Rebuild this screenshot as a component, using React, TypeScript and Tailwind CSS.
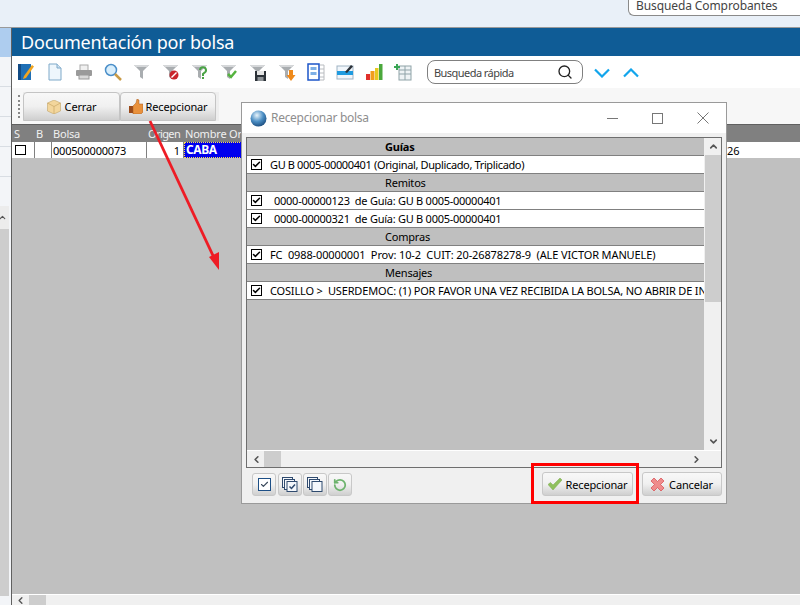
import React from 'react';
import { Check, ChevronDown, ChevronLeft, ChevronRight, ChevronUp, RotateCcw, Search } from 'lucide-react';

const FONT = "font-['Noto_Sans','Open_Sans',sans-serif]";

const ToolIcon: React.FC<{ children: React.ReactNode }> = ({ children }) => (
  <svg width="18" height="18" viewBox="0 0 18 18" className="shrink-0">
    {children}
  </svg>
);

const Funnel = () => (
  <>
    <path d="M1 2h15l-6 6v8l-3-2V8z" fill="#a9adb0" />
    <path d="M1 2h15l-2 2H3z" fill="#d5d7d9" />
  </>
);

const toolbarIcons = [
  <ToolIcon key="edit">
    <rect x="1" y="1" width="13" height="16" fill="#1f6fb5" />
    <rect x="1" y="1" width="3" height="16" fill="#124b85" />
    <path d="M7 13L15 2l2 1.500L9 15l-3 1z" fill="#f2a51f" />
  </ToolIcon>,
  <ToolIcon key="doc">
    <path d="M3 1h8l4 4v12H3z" fill="#eef6fc" stroke="#7fa9c9" />
    <path d="M11 1v4h4" fill="#cfe2f1" stroke="#7fa9c9" />
  </ToolIcon>,
  <ToolIcon key="print">
    <rect x="5" y="2" width="8" height="6" fill="#f0f0f0" stroke="#aaa" />
    <rect x="1" y="7" width="16" height="6" rx="1" fill="#9a9a9a" />
    <rect x="4" y="12" width="10" height="4" fill="#d8d8d8" stroke="#999" />
  </ToolIcon>,
  <ToolIcon key="search">
    <circle cx="7" cy="7" r="5.500" fill="#d8eefc" stroke="#4b8fc9" strokeWidth="1.500" />
    <path d="M11 11l6 6" stroke="#c99a45" strokeWidth="2.500" />
  </ToolIcon>,
  <ToolIcon key="filter"><Funnel /></ToolIcon>,
  <ToolIcon key="filter-no">
    <Funnel />
    <circle cx="12" cy="12" r="4.500" fill="#c9252c" />
    <path d="M9.500 14.500l5-5" stroke="#fff" strokeWidth="1.500" />
  </ToolIcon>,
  <ToolIcon key="filter-help">
    <Funnel />
    <path d="M9 7a3 3 0 1 1 4 3l-1 1v2" fill="none" stroke="#4aa345" strokeWidth="2" />
    <rect x="11" y="14" width="2" height="2" fill="#4aa345" />
  </ToolIcon>,
  <ToolIcon key="filter-ok">
    <Funnel />
    <path d="M8 11l3 3 5-6" fill="none" stroke="#55b33f" strokeWidth="2.500" />
  </ToolIcon>,
  <ToolIcon key="filter-save">
    <Funnel />
    <rect x="6" y="8" width="11" height="10" fill="#2c3238" />
    <rect x="8" y="8" width="7" height="4" fill="#e6e6e6" />
    <rect x="8.500" y="14" width="6" height="4" fill="#8f9498" />
  </ToolIcon>,
  <ToolIcon key="filter-down">
    <Funnel />
    <path d="M11 7h4v5h2.500L13 18l-4.500-6H11z" fill="#ef8a1c" />
  </ToolIcon>,
  <ToolIcon key="columns">
    <rect x="1" y="1" width="11" height="16" fill="#fff" stroke="#1d56c9" strokeWidth="1.500" />
    <rect x="3.500" y="4" width="6" height="3" fill="#7eb0e6" />
    <rect x="3.500" y="9" width="6" height="3" fill="#7eb0e6" />
    <path d="M13 2h4v15h-4M13 6h4M13 10h4M13 14h4" fill="none" stroke="#b9bcc0" />
  </ToolIcon>,
  <ToolIcon key="card">
    <rect x="1" y="3" width="16" height="13" fill="#f1f6fb" stroke="#9fb3c4" />
    <rect x="1" y="8" width="16" height="4" fill="#1f9be0" />
    <path d="M9 9l6-7 2 1.500L11 10z" fill="#2b3138" />
  </ToolIcon>,
  <ToolIcon key="chart">
    <rect x="1" y="11" width="4" height="6" fill="#e0302b" />
    <rect x="5.500" y="8" width="4" height="9" fill="#f29d1c" />
    <rect x="10" y="5" width="3.500" height="12" fill="#e8c81f" />
    <rect x="14" y="1" width="3.500" height="16" fill="#4aa83c" />
  </ToolIcon>,
  <ToolIcon key="add-table">
    <rect x="5" y="3" width="12" height="14" fill="#eef3f5" stroke="#8fa3a8" />
    <path d="M5 7h12M5 11h12M11 3v14" stroke="#8fa3a8" />
    <path d="M3 1v6M0 4h6" stroke="#3aa655" strokeWidth="2" />
  </ToolIcon>,
];

const Bevel = 'bg-gradient-to-b from-[#f8f8f8] via-[#f0f0f0] to-[#cfcfcf]';

const SectionRow: React.FC<{ label: string; bold?: boolean }> = ({ label, bold }) => (
  <div className={`h-[18px] shrink-0 bg-[#bfbfbf] border-b border-[#808080] flex items-center pl-[138px] text-[11px] leading-none text-black tracking-[-0.2px] ${bold ? 'font-bold' : ''}`}>
    {label}
  </div>
);

const CheckRow: React.FC<{ label: string; indent?: boolean; tracking: string }> = ({ label, indent, tracking }) => (
  <div className="h-[18px] shrink-0 bg-white border-b border-[#808080] flex items-center pl-[4px] overflow-hidden">
    <span className="w-[11px] h-[11px] shrink-0 border border-black bg-white flex items-center justify-center">
      <Check size={9} strokeWidth={4} color="#000" />
    </span>
    <span className={`text-[11px] leading-none text-black whitespace-pre ${tracking} ${indent ? 'ml-[12px]' : 'ml-[8px]'}`}>{label}</span>
  </div>
);

const SmallButton: React.FC<{ children: React.ReactNode }> = ({ children }) => (
  <div className={`w-[24px] h-[23px] rounded-[3px] border border-[#c8c8c8] flex items-center justify-center ${Bevel}`}>
    {children}
  </div>
);

const StackIcon: React.FC<{ checked?: boolean }> = ({ checked }) => (
  <svg width="16" height="15" viewBox="0 0 16 15">
    <rect x="0.500" y="0.500" width="10" height="10" fill="#f4f7fb" stroke="#2f4a6e" />
    <rect x="2.500" y="2.500" width="10" height="10" fill="#f4f7fb" stroke="#2f4a6e" />
    <rect x="5" y="4.500" width="10" height="10" fill="#f4f7fb" stroke="#2f4a6e" />
    {checked && <path d="M7.500 9.500l2 2 3.500-4" fill="none" stroke="#2f4a6e" strokeWidth="1.500" />}
  </svg>
);

const App: React.FC = () => {
  return (
    <div className={`relative w-[800px] h-[605px] overflow-hidden bg-white flex flex-col ${FONT}`}>
      {/* top strip */}
      <div className="h-[28px] shrink-0 bg-[#e9f0f8] border-b border-[#9a9a9a] flex justify-end items-start">
        <div className="w-[172px] h-[17px] -mt-px bg-white border border-[#8a8a8a] rounded-bl-[6px] border-r-0 pl-[7px] text-[12px] leading-[11px] text-[#444] tracking-[-0.1px] whitespace-nowrap">
          Busqueda Comprobantes
        </div>
      </div>

      <div className="flex-1 flex min-h-0">
        {/* left strip */}
        <div className="w-[11px] shrink-0 bg-[#f3f5f8] flex flex-col">
          <div className="h-[29px] bg-[#aecdef]" />
          <div className="h-[30px] border-b border-[#d8dde3]" />
          <div className="h-[30px] border-b border-[#d8dde3]" />
          <div className="h-[30px] border-b border-[#d8dde3]" />
          <div className="h-[30px] border-b border-[#d8dde3]" />
          <div className="h-[29px]" />
          <div className="h-[23px] bg-[#ececec] overflow-hidden w-[9px] flex items-center">
            <ChevronUp size={9} color="#555" strokeWidth={3} className="-ml-[2px]" />
          </div>
          <div className="flex-1 w-[9px] bg-[#cdcdcd]" />
          <div className="h-[9px] shrink-0" />
        </div>

        <div className="flex-1 min-w-0 flex flex-col border-l border-[#606060]">
          <div className="h-[28px] shrink-0 bg-[#0f5c96] pl-[9px] text-[18px] leading-[28px] text-white tracking-[-0.2px]">
            Documentación por bolsa
          </div>

          {/* icon toolbar */}
          <div className="h-[32px] shrink-0 bg-white flex items-center pl-[5px] gap-[11px]">
            {toolbarIcons}
            <div className="ml-[4px] w-[156px] h-[24px] rounded-[8px] border border-[#808080] flex items-center pl-[6px] pr-[9px] justify-between">
              <span className="text-[11px] leading-none text-[#444] tracking-[-0.55px]">Busqueda rápida</span>
              <Search size={16} strokeWidth={2} color="#222" />
            </div>
            <svg width="16" height="10" viewBox="0 0 16 10" fill="none" className="shrink-0 mt-[1px]">
              <path d="M1 1.500L8 8.500L15 1.500" stroke="#12a5ec" strokeWidth="2.200" />
            </svg>
            <svg width="16" height="10" viewBox="0 0 16 10" fill="none" className="shrink-0 ml-[2px] mt-[1px]">
              <path d="M1 8.500L8 1.500L15 8.500" stroke="#12a5ec" strokeWidth="2.200" />
            </svg>
          </div>

          {/* action toolbar */}
          <div className="h-[37px] shrink-0 bg-[#f7f7f7] border-b border-[#606060] flex items-start pt-[4px] pl-[6px]">
            <div className="w-[2px] h-[23px] mt-[3px] mr-[3px] border-l-2 border-dotted border-[#888]" />
            <div className="flex bg-[#eeeeee] pr-[3px]">
              <div className={`w-[97px] h-[29px] rounded-t-[4px] border border-[#c4c4c4] flex items-center justify-center gap-[4px] ${Bevel}`}>
                <svg width="14" height="14" viewBox="0 0 14 14">
                  <path d="M7 0l6.500 3v8L7 14 .5 11V3z" fill="#f3d69c" stroke="#b99a5a" strokeWidth="0.500" />
                  <path d="M7 6.500L.5 3M7 6.500L13.500 3M7 6.500V14" stroke="#c8a766" strokeWidth="0.700" fill="none" />
                </svg>
                <span className="text-[11px] leading-none text-black tracking-[-0.15px]">Cerrar</span>
              </div>
              <div className={`w-[96px] h-[29px] rounded-t-[4px] border border-[#c4c4c4] flex items-center justify-center gap-[3px] ${Bevel}`}>
                <svg width="14" height="15" viewBox="0 0 14 15">
                  <rect x="0" y="7" width="4" height="7" fill="#9a4a1a" />
                  <path d="M4 7l3-3 1-4 2 1v4h4v8l-2 2H4z" fill="#e9913c" stroke="#a65a1c" strokeWidth="0.500" />
                </svg>
                <span className="text-[11px] leading-none text-black tracking-[-0.15px]">Recepcionar</span>
              </div>
            </div>
          </div>

          {/* grid */}
          <div className="h-[17px] shrink-0 bg-[#808080] flex items-center text-[11px] leading-none text-[#f0f0f0] tracking-[-0.2px]">
            <span className="w-[24px] pl-[2px]">S</span>
            <span className="w-[17px]">B</span>
            <span className="w-[95px]">Bolsa</span>
            <span className="w-[37px] tracking-[-0.6px]">Origen</span>
            <span className="whitespace-nowrap">Nombre Origen</span>
          </div>
          <div className="h-[16px] shrink-0 bg-white flex text-[11px] leading-none text-black">
            <div className="w-[23px] border-r border-[#808080] pl-[3px] flex items-center">
              <span className="block w-[11px] h-[10px] border border-black" />
            </div>
            <div className="w-[17px] border-r border-[#808080]" />
            <div className="w-[95px] border-r border-[#808080] flex items-center pl-[1px] tracking-[-0.2px]">000500000073</div>
            <div className="w-[37px] border-r border-[#808080] flex items-center justify-end pr-[3px]">1</div>
            <div className="w-[80px] bg-[#0000ee] text-white text-[12px] font-bold tracking-[-0.4px] flex items-center pl-[1px] border border-dotted border-[#ffe14d]">CABA</div>
            <div className="flex-1 flex items-center pl-[463px]">26</div>
          </div>
          <div className="flex-1 bg-[#c0c0c0]" />

          {/* bottom scrollbar */}
          <div className="h-[11px] shrink-0 bg-[#f0f0f0] border-t border-white flex items-center">
            <ChevronLeft size={11} strokeWidth={3} color="#555" className="ml-[3px]" />
            <div className="ml-[3px] w-[17px] h-full bg-[#cdcdcd]" />
          </div>
        </div>
      </div>

      {/* dialog */}
      <div className="absolute left-[241px] top-[102px] w-[486px] h-[402px] bg-[#f0f0f0] border border-[#9a9a9a] flex flex-col">
        <div className="h-[30px] shrink-0 bg-white flex items-center pl-[8px]">
          <svg width="17" height="17" viewBox="0 0 17 17">
            <defs>
              <radialGradient id="globe" cx="0.400" cy="0.300" r="0.800">
                <stop offset="0" stopColor="#e8f4fb" />
                <stop offset="0.500" stopColor="#4b8ec4" />
                <stop offset="1" stopColor="#123f70" />
              </radialGradient>
            </defs>
            <circle cx="8.500" cy="8.500" r="8" fill="url(#globe)" />
          </svg>
          <span className="ml-[4px] text-[12px] leading-none text-[#8e8e8e] tracking-[-0.3px]">Recepcionar bolsa</span>
          <div className="ml-auto flex items-center pr-[17px]">
            <span className="block w-[11px] h-px bg-[#777]" />
            <span className="block ml-[34px] w-[11px] h-[11px] border border-[#777]" />
            <svg width="12" height="12" viewBox="0 0 12 12" className="ml-[34px]">
              <path d="M.5.500l11 11M11.500.500l-11 11" stroke="#777" strokeWidth="1" fill="none" />
            </svg>
          </div>
        </div>

        <div className="mx-[4px] mt-[4px] h-[331px] shrink-0 border border-[#6e6e6e] bg-[#f0f0f0] flex flex-col">
          <div className="flex-1 flex min-h-0">
            <div className="flex-1 min-w-0 bg-[#c0c0c0] flex flex-col overflow-hidden">
              <SectionRow label="Guías" bold />
              <CheckRow tracking="tracking-[-0.36px]" label="GU B 0005-00000401 (Original, Duplicado, Triplicado)" />
              <SectionRow label="Remitos" />
              <CheckRow indent tracking="tracking-[-0.26px]" label="0000-00000123  de Guía: GU B 0005-00000401" />
              <CheckRow indent tracking="tracking-[-0.26px]" label="0000-00000321  de Guía: GU B 0005-00000401" />
              <SectionRow label="Compras" />
              <CheckRow tracking="tracking-[-0.12px]" label="FC  0988-00000001  Prov: 10-2  CUIT: 20-26878278-9  (ALE VICTOR MANUELE)" />
              <SectionRow label="Mensajes" />
              <CheckRow tracking="tracking-[-0.17px]" label="COSILLO >  USERDEMOC: (1) POR FAVOR UNA VEZ RECIBIDA LA BOLSA, NO ABRIR DE INMEDIATO" />
            </div>
            <div className="w-[17px] shrink-0 bg-[#f0f0f0] flex flex-col pl-px">
              <div className="h-[17px] flex items-center justify-center">
                <ChevronUp size={11} strokeWidth={3.5} color="#555" />
              </div>
              <div className="h-[147px] bg-[#cdcdcd]" />
              <div className="flex-1" />
              <div className="h-[17px] flex items-center justify-center">
                <ChevronDown size={11} strokeWidth={3.5} color="#555" />
              </div>
            </div>
          </div>
          <div className="h-[17px] shrink-0 border-t border-white flex items-center">
            <ChevronLeft size={11} strokeWidth={3.5} color="#555" className="ml-[4px]" />
            <div className="ml-[2px] w-[17px] h-full bg-[#cdcdcd]" />
            <ChevronRight size={11} strokeWidth={3.5} color="#555" className="ml-auto mr-[19px]" />
          </div>
        </div>

        <div className="flex-1 flex items-start pt-[4px] pl-[10px] pr-[4px]">
          <div className="flex gap-[1px] mt-[1px]">
            <div className="mr-px">
              <SmallButton>
                <span className="w-[13px] h-[13px] border border-[#1d4f86] bg-white flex items-center justify-center">
                  <Check size={9} strokeWidth={3} color="#3a4a5c" />
                </span>
              </SmallButton>
            </div>
            <SmallButton><StackIcon checked /></SmallButton>
            <SmallButton><StackIcon /></SmallButton>
            <SmallButton><RotateCcw size={14} strokeWidth={3} color="#6db36d" /></SmallButton>
          </div>
          <div className={`ml-auto w-[91px] h-[24px] rounded-[3px] border border-[#c8c8c8] flex items-center justify-center gap-[4px] ${Bevel}`}>
            <svg width="14" height="12" viewBox="0 0 14 12">
              <path d="M0 6.500L2.500 4.500L5 7L12 0L14 2L5 12z" fill="#8fc05c" stroke="#7aa84c" strokeWidth="0.500" />
            </svg>
            <span className="text-[11px] leading-none text-black tracking-[-0.15px]">Recepcionar</span>
          </div>
          <div className={`ml-[9px] w-[80px] h-[24px] rounded-[3px] border border-[#c8c8c8] flex items-center justify-center gap-[5px] ${Bevel}`}>
            <svg width="13" height="13" viewBox="0 0 13 13">
              <path d="M0 3L3 0L6.500 3.500L10 0L13 3L9.500 6.500L13 10L10 13L6.500 9.500L3 13L0 10L3.500 6.500z" fill="#ef8c8c" stroke="#d9484d" strokeWidth="0.700" />
            </svg>
            <span className="text-[11px] leading-none text-black tracking-[-0.15px]">Cancelar</span>
          </div>
        </div>
      </div>

      {/* annotations */}
      <div className="absolute left-[531px] top-[463px] w-[108px] h-[41px] border-[3px] border-[#ff0000]" />
      <svg className="absolute left-0 top-0 pointer-events-none" width="800" height="605">
        <path d="M150 121L216 262" stroke="#ee1c25" strokeWidth="2.800" />
        <path d="M219 270L209 257L219 252z" fill="#ee1c25" />
      </svg>
    </div>
  );
};

export default App;
